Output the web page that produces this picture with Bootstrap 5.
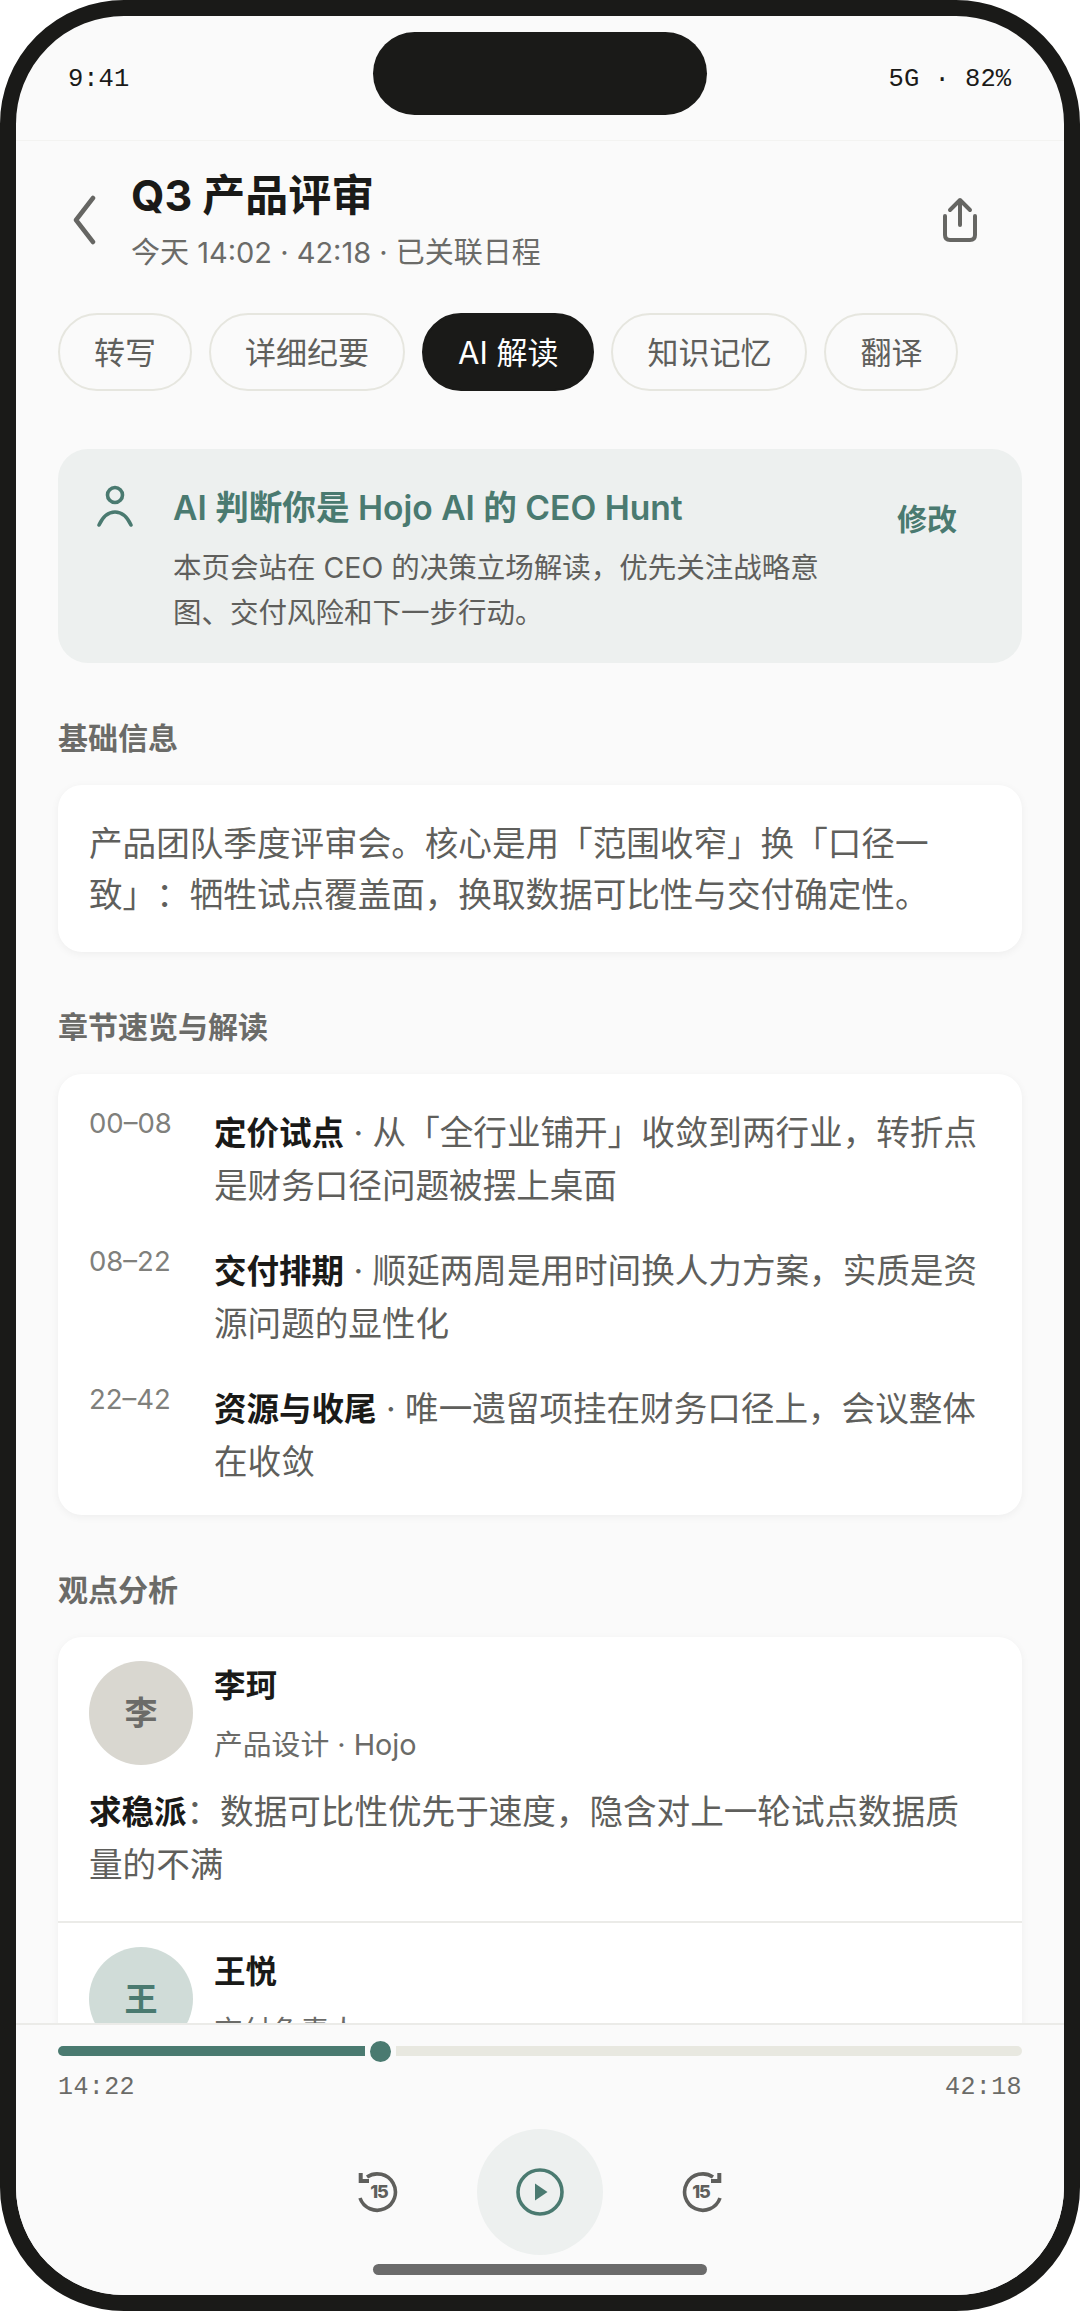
<!DOCTYPE html>
<html lang="zh-CN">

<head>
    <meta charset="UTF-8">
    <meta name="viewport" content="width=device-width, initial-scale=1.0">
    <title>Q3 产品评审</title>
    <link href="https://cdn.jsdelivr.net/npm/bootstrap@5.3.3/dist/css/bootstrap.min.css" rel="stylesheet">
    <style>
        html, body { height: 100%; }

        body {
            margin: 0;
            background: #fff;
            font-family: Inter, "Noto Sans CJK SC", sans-serif;
            color: #1a1a18;
            text-spacing-trim: space-all;
        }

        .phone-frame {
            width: 1080px;
            height: 2311px;
            border: 16px solid #1a1a18;
            border-radius: 124px;
            background: #fafafa;
            overflow: hidden;
            position: relative;
        }

        .island {
            position: absolute;
            left: 357px;
            top: 16px;
            width: 334px;
            height: 83px;
            border-radius: 42px;
            background: #1a1a18;
        }

        .status-row {
            height: 125px;
            padding: 48px 53px 0 52px;
            border-bottom: 1px solid #f3f3f1;
            font: 25.5px/32px "Liberation Mono", monospace;
            flex-shrink: 0;
        }

        .head-row {
            padding: 24px 58px 0 57px;
            flex-shrink: 0;
        }

        .back-btn { width: 58px; padding-top: 30px; }
        .share-btn { margin: 32px 26px 0 0; }
        .title-main { font-size: 43px; font-weight: 700; line-height: 60px; }
        .title-sub { font-size: 29px; line-height: 40px; color: #6b6b68; margin-top: 8px; }

        .tab-row { padding: 40px 42px 0; gap: 17px; flex-shrink: 0; }

        .tab-pill {
            height: 78px;
            padding: 0 34px;
            font-size: 31px;
            line-height: 1;
            color: #5f5f5c;
            border: 2.5px solid #e6e6df;
            border-radius: 39px;
            background: transparent;
            display: flex;
            align-items: center;
        }

        .tab-pill.on {
            background: #1a1a18;
            border-color: #1a1a18;
            color: #fff;
        }

        .scroll-area { flex: 1 1 0; overflow: hidden; padding: 58px 42px 0; min-height: 0; }

        .ai-box {
            background: #edf0ef;
            border-radius: 30px;
            height: 214px;
            padding: 36px 65px 0 37px;
            gap: 38px;
        }

        .ai-title { font-size: 33.6px; font-weight: 600; line-height: 46px; color: #4a7a70; }
        .ai-text { font-size: 28.5px; line-height: 45px; color: #5f5f5c; margin-top: 14px; }
        .ai-edit { font-size: 30px; font-weight: 600; color: #4a7a70; margin-top: 14px; padding: 0; border: 0; line-height: 40px; }

        .sec-title { font-size: 30px; font-weight: 700; line-height: 40px; color: #6b6b68; margin: 55px 0 27px; }

        .sheet {
            border: 0;
            border-radius: 24px;
            background: #fff;
            box-shadow: 0 2px 8px rgba(0, 0, 0, .05);
            font-size: 33.6px;
            line-height: 52px;
            color: #5f5f5c;
        }

        .sheet b { color: #1a1a18; font-weight: 700; font-size: 32.5px; }

        .basic-box { padding: 33px 31px 32px; line-height: 51px; }
        .chapter-box { padding: 33px 31px 27px; gap: 33px; }
        .chapter-time { width: 125px; flex-shrink: 0; font-size: 27.5px; line-height: 32px; color: #80807c; }

        .view-item { padding: 24px 31px 0; border-bottom: 2px solid #ebebe8; height: 286px; }
        .view-item:last-child { border-bottom: 0; }

        .face {
            width: 104px;
            height: 104px;
            border-radius: 50%;
            font-size: 33px;
            font-weight: 600;
            flex-shrink: 0;
        }

        .face-grey { background: #d9d7d0; color: #6b6b68; }
        .face-green { background: #d0dcd8; color: #4a7a70; }
        .view-head { gap: 21px; }
        .view-name { font-size: 31.5px; font-weight: 700; line-height: 40px; color: #1a1a18; margin-top: 5px; }
        .view-role { font-size: 28.8px; line-height: 40px; color: #6b6b68; margin-top: 19px; }
        .view-text { margin-top: 21px; padding-right: 6px; }

        .player {
            height: 272px;
            flex-shrink: 0;
            border-top: 2px solid #ebebe8;
            background: #fafafa;
            padding: 21px 42px 0;
            position: relative;
        }

        .seek-row { height: 10px; }
        .seek-done { width: 307px; height: 10px; background: #4a7a70; border-radius: 5px 0 0 5px; }
        .seek-left { flex: 1; height: 10px; background: #e8e8e0; border-radius: 0 5px 5px 0; }
        .seek-dot {
            width: 31px;
            height: 31px;
            margin: -10px 0;
            border: 5px solid #fafafa;
            border-radius: 50%;
            background: #4a7a70;
            flex-shrink: 0;
        }

        .time-row { font: 25px/32px "Liberation Mono", monospace; letter-spacing: .4px; color: #6b6b68; margin-top: 16px; }
        .ctrl-row { margin-top: 25px; gap: 64px; }
        .ctrl-btn { width: 70px; height: 70px; border: 0; padding: 0; background: transparent; margin-top: -3px; }
        .play-btn { width: 126px; height: 126px; border: 0; padding: 0; border-radius: 50%; background: #edf0ef; }

        .home-bar {
            position: absolute;
            left: 357px;
            bottom: 20px;
            width: 334px;
            height: 11px;
            border-radius: 6px;
            background: #6b6b6b;
        }
    </style>
</head>

<body>
    <div class="phone-frame d-flex flex-column">
        <div class="status-row d-flex justify-content-between">
            <span>9:41</span>
            <span>5G · 82%</span>
        </div>
        <div class="island"></div>

        <div class="head-row d-flex align-items-start">
            <div class="back-btn">
                <svg width="24" height="50" viewBox="0 0 24 50" fill="none" stroke="#666663" stroke-width="4.5" stroke-linecap="round" stroke-linejoin="round">
                    <path d="M20 3 L3 25 L20 47"/>
                </svg>
            </div>
            <div class="flex-grow-1">
                <div class="title-main">Q3 产品评审</div>
                <div class="title-sub">今天 14:02 · 42:18 · 已关联日程</div>
            </div>
            <div class="share-btn">
                <svg class="d-block" width="40" height="48" viewBox="0 0 40 48" fill="none" stroke="#666663" stroke-width="4" stroke-linecap="round" stroke-linejoin="round">
                    <path d="M20 28 V3 M10 13 L20 3 L30 13 M5 19 V38 Q5 43 10 43 H30 Q35 43 35 38 V19"/>
                </svg>
            </div>
        </div>

        <div class="tab-row d-flex">
            <div class="tab-pill">转写</div>
            <div class="tab-pill">详细纪要</div>
            <div class="tab-pill on">AI 解读</div>
            <div class="tab-pill">知识记忆</div>
            <div class="tab-pill">翻译</div>
        </div>

        <div class="scroll-area">
            <div class="ai-box d-flex align-items-start">
                <svg class="flex-shrink-0" width="40" height="44" viewBox="0 0 40 44" fill="none" stroke="#4a7a70" stroke-width="3.6" stroke-linecap="round">
                    <circle cx="20" cy="10" r="7.5"/>
                    <path d="M4 40 Q10 27 20 27 Q30 27 36 40"/>
                </svg>
                <div class="flex-grow-1">
                    <div class="ai-title">AI 判断你是 Hojo AI 的 CEO Hunt</div>
                    <div class="ai-text">本页会站在 CEO 的决策立场解读，优先关注战略意<br>图、交付风险和下一步行动。</div>
                </div>
                <button class="btn ai-edit flex-shrink-0">修改</button>
            </div>

            <div class="sec-title">基础信息</div>
            <div class="card sheet basic-box">产品团队季度评审会。核心是用「范围收窄」换「口径一致」：牺牲试点覆盖面，换取数据可比性与交付确定性。</div>

            <div class="sec-title">章节速览与解读</div>
            <div class="card sheet chapter-box d-flex flex-column">
                <div class="d-flex">
                    <div class="chapter-time">00–08</div>
                    <div><b>定价试点</b> · 从「全行业铺开」收敛到两行业，转折点是财务口径问题被摆上桌面</div>
                </div>
                <div class="d-flex">
                    <div class="chapter-time">08–22</div>
                    <div><b>交付排期</b> · 顺延两周是用时间换人力方案，实质是资源问题的显性化</div>
                </div>
                <div class="d-flex">
                    <div class="chapter-time">22–42</div>
                    <div><b>资源与收尾</b> · 唯一遗留项挂在财务口径上，会议整体在收敛</div>
                </div>
            </div>

            <div class="sec-title">观点分析</div>
            <div class="card sheet">
                <div class="view-item">
                    <div class="view-head d-flex">
                        <div class="face face-grey d-flex align-items-center justify-content-center">李</div>
                        <div>
                            <div class="view-name">李珂</div>
                            <div class="view-role">产品设计 · Hojo</div>
                        </div>
                    </div>
                    <div class="view-text"><b>求稳派</b>：数据可比性优先于速度，隐含对上一轮试点数据质量的不满</div>
                </div>
                <div class="view-item">
                    <div class="view-head d-flex">
                        <div class="face face-green d-flex align-items-center justify-content-center">王</div>
                        <div>
                            <div class="view-name">王悦</div>
                            <div class="view-role">交付负责人</div>
                        </div>
                    </div>
                </div>
            </div>
        </div>

        <div class="player">
            <div class="seek-row d-flex align-items-center">
                <div class="seek-done"></div>
                <div class="seek-dot"></div>
                <div class="seek-left"></div>
            </div>
            <div class="time-row d-flex justify-content-between">
                <span>14:22</span>
                <span>42:18</span>
            </div>
            <div class="ctrl-row d-flex justify-content-center align-items-center">
                <button class="ctrl-btn d-flex align-items-center justify-content-center">
                    <svg width="44" height="44" viewBox="0 0 44 44" fill="none" stroke="#5f5f5c" stroke-width="3.6">
                        <path d="M11 8 A18.2 18.2 0 1 1 4 29"/>
                        <path d="M4.7 4 V12 H13" stroke-width="4"/>
                        <text x="23" y="29" text-anchor="middle" font-family="Inter, sans-serif" font-size="18" font-weight="800" letter-spacing="-1" fill="#5f5f5c" stroke="none">15</text>
                    </svg>
                </button>
                <button class="play-btn d-flex align-items-center justify-content-center">
                    <svg width="48" height="48" viewBox="0 0 48 48" fill="none">
                        <circle cx="24" cy="24" r="22" stroke="#4a7a70" stroke-width="3.6"/>
                        <path d="M19 15.5 L31.5 24 L19 32.5 Z" fill="#4a7a70"/>
                    </svg>
                </button>
                <button class="ctrl-btn d-flex align-items-center justify-content-center">
                    <svg width="44" height="44" viewBox="0 0 44 44" fill="none" stroke="#5f5f5c" stroke-width="3.6">
                        <path d="M33 8 A18.2 18.2 0 1 0 40 29"/>
                        <path d="M39.3 4 V12 H31" stroke-width="4"/>
                        <text x="21" y="29" text-anchor="middle" font-family="Inter, sans-serif" font-size="18" font-weight="800" letter-spacing="-1" fill="#5f5f5c" stroke="none">15</text>
                    </svg>
                </button>
            </div>
            <div class="home-bar"></div>
        </div>
    </div>

    <script src="https://cdn.jsdelivr.net/npm/bootstrap@5.3.3/dist/js/bootstrap.bundle.min.js"></script>
</body>

</html>
